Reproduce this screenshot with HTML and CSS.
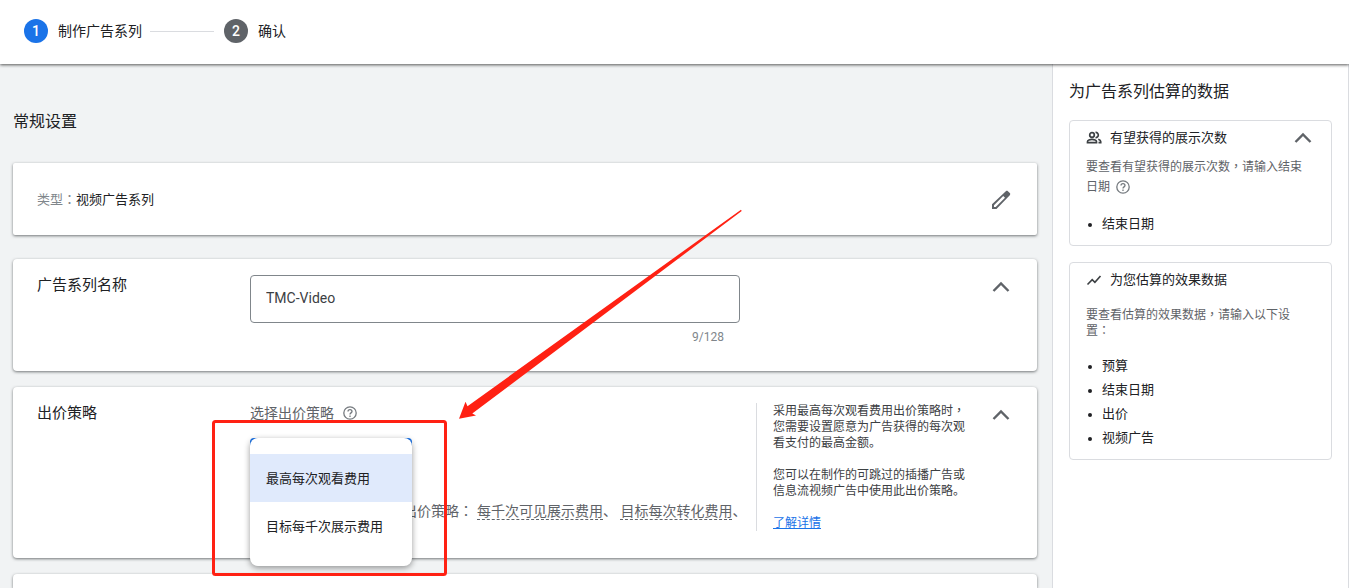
FILE: index.html
```html
<!DOCTYPE html>
<html lang="zh-CN">
<head>
<meta charset="utf-8">
<title>制作广告系列</title>
<link rel="stylesheet" href="styles.css">
</head>
<body>
<header class="steps">
  <span class="step-number current">1</span><span class="step-name">制作广告系列</span>
  <span class="step-line"></span>
  <span class="step-number">2</span><span class="step-name">确认</span>
</header>

<div class="layout">
  <main class="main">
    <h1 class="page-title">常规设置</h1>

    <section class="card type-card">
      <p class="type"><span class="type-label">类型<span class="mid" lang="zh-TW">：</span></span>视频广告系列</p>
      <button class="icon-button" aria-label="修改">
        <svg width="24" height="24" viewBox="0 0 24 24" fill="#5f6368"><path fill-rule="evenodd" d="M3 21v-4.800L16.800 3.200c.7-.6 1.500-.6 2.100 0l1.900 1.900c.6.6.6 1.500 0 2.100L7.500 21zM5 17.200V19h1.700L16 9.700 14.200 8z"/></svg>
      </button>
    </section>

    <section class="card form-card">
      <label class="card-label" for="name">广告系列名称</label>
      <div class="name-field">
        <input class="name-input" id="name" type="text" value="TMC-Video">
        <span class="counter">9/128</span>
      </div>
      <button class="icon-button last" aria-label="收起">
        <svg width="24" height="24" viewBox="0 0 24 24" fill="none" stroke="#5f6368" stroke-width="2.400"><path d="M4.500 16l7.500-7.500 7.500 7.500"/></svg>
      </button>
    </section>

    <section class="card form-card bid-card">
      <h2 class="card-label">出价策略</h2>
      <div class="bid-field">
        <div class="bid-heading">
          <label for="strategy">选择出价策略</label>
          <svg width="16" height="16" viewBox="0 0 16 16" fill="none" stroke="#757a7f" stroke-width="1.300"><circle cx="8" cy="8" r="6.200"/><path d="M6 6.600c0-1.200.9-2 2-2s2 .8 2 1.900c0 1.300-2 1.500-2 3"/><path d="M8 10.600v1.400"/></svg>
        </div>
        <div class="select-wrap">
          <select class="select" id="strategy"><option></option></select>
          <div class="menu" role="listbox">
            <button class="option selected" role="option" aria-selected="true">最高每次观看费用</button>
            <button class="option" role="option" aria-selected="false">目标每千次展示费用</button>
          </div>
        </div>
        <p class="others">出价策略<span class="mid" lang="zh-TW">：</span><span class="term">每千次可见展示费用</span>、 <span class="term">目标每次转化费用</span>、</p>
      </div>
      <aside class="help">
        <p>采用最高每次观看费用出价策略时<span class="mid" lang="zh-TW">，</span><br>您需要设置愿意为广告获得的每次观<br>看支付的最高金额。</p>
        <p>您可以在制作的可跳过的插播广告或<br>信息流视频广告中使用此出价策略。</p>
        <p><a class="link" href="#">了解详情</a></p>
      </aside>
      <button class="icon-button last" aria-label="收起">
        <svg width="24" height="24" viewBox="0 0 24 24" fill="none" stroke="#5f6368" stroke-width="2.400"><path d="M4.500 16l7.500-7.500 7.500 7.500"/></svg>
      </button>
    </section>

    <section class="card next-card"></section>
  </main>

  <aside class="sidebar">
    <h2 class="side-title">为广告系列估算的数据</h2>
    <section class="estimate">
      <div class="estimate-head">
        <svg width="16" height="16" viewBox="0 0 16 16" fill="none" stroke="#3c4043" stroke-width="1.700"><circle cx="6" cy="5" r="2.300"/><path d="M1.500 12.700v-1c0-1.500 2.500-2.400 4.500-2.400s4.500.9 4.500 2.400v1z"/><path d="M9.500 2.500c1.500-.2 2.800 1 2.800 2.500s-1.300 2.700-2.800 2.500M12.300 9.300c1.400.5 2.400 1.200 2.400 2.300v1.100h-2.200"/></svg>
        <h3 class="estimate-title">有望获得的展示次数</h3>
        <button class="icon-button last" aria-label="收起">
          <svg width="24" height="24" viewBox="0 0 24 24" fill="none" stroke="#5f6368" stroke-width="2.400"><path d="M4.500 16l7.500-7.500 7.500 7.500"/></svg>
        </button>
      </div>
      <p class="note">要查看有望获得的展示次数<span class="mid" lang="zh-TW">，</span>请输入结束<br>日期 <svg class="note-icon" width="16" height="16" viewBox="0 0 16 16" fill="none" stroke="#757a7f" stroke-width="1.300"><circle cx="8" cy="8" r="6.200"/><path d="M6 6.600c0-1.200.9-2 2-2s2 .8 2 1.900c0 1.300-2 1.500-2 3"/><path d="M8 10.600v1.400"/></svg></p>
      <ul class="needs"><li>结束日期</li></ul>
    </section>
    <section class="estimate">
      <div class="estimate-head">
        <svg width="16" height="16" viewBox="0 0 16 16" fill="none" stroke="#3c4043" stroke-width="1.600"><path d="M1.500 12.500l4.700-4.800 2.700 2.700L14.500 4"/></svg>
        <h3 class="estimate-title">为您估算的效果数据</h3>
      </div>
      <p class="note tight">要查看估算的效果数据<span class="mid" lang="zh-TW">，</span>请输入以下设<br>置<span class="mid" lang="zh-TW">：</span></p>
      <ul class="needs"><li>预算</li><li>结束日期</li><li>出价</li><li>视频广告</li></ul>
    </section>
  </aside>
</div>

<svg class="markup" width="760" height="588" viewBox="0 0 760 588" aria-hidden="true">
  <rect x="213.500" y="421.500" width="232" height="153" rx="2" fill="none" stroke="#ff2113" stroke-width="3"/>
  <path fill="#ff2113" d="M459 418.700L465.500 401.700 467.500 406.200 741 209.700 741.700 211 472.300 413.500 476 415.500z"/>
</svg>
</body>
</html>
```
FILE: styles.css
```css
* { box-sizing: border-box; }

body {
  margin: 0;
  height: 100vh;
  overflow: hidden;
  position: relative;
  display: flex;
  flex-direction: column;
  background: #f1f3f4;
  color: #202124;
  font: 13px/20px Roboto, "Noto Sans CJK SC", sans-serif;
}

h1, h2, h3, p, ul { margin: 0; padding: 0; font-weight: 400; }
button { border: 0; padding: 0; background: none; font: inherit; color: inherit; }
svg { flex: none; }

/* Chinese punctuation set in the middle of its cell */
.mid { font-family: "Noto Sans CJK TC", sans-serif; line-height: 1; }

.steps {
  position: relative;
  z-index: 1;
  flex: none;
  display: flex;
  align-items: center;
  height: 64px;
  padding: 0 24px 2px;
  background: #fff;
  box-shadow: 0 1px 3px rgba(0, 0, 0, .65);
  font-size: 14px;
}
.step-number {
  width: 24px;
  height: 24px;
  margin-right: 10px;
  border-radius: 50%;
  background: #5f6368;
  color: #fff;
  font-weight: 500;
  line-height: 24px;
  text-align: center;
}
.step-number.current { background: #1a73e8; }
.step-line { width: 64px; height: 1px; margin: 0 10px 0 8px; background: #dadce0; }

.layout { flex: 1; min-height: 0; display: flex; }
.main {
  flex: 1;
  min-width: 0;
  display: flex;
  flex-direction: column;
  padding: 46px 15px 0 13px;
}
.page-title { margin-bottom: 29px; font-size: 16px; line-height: 24px; }

.card {
  flex: none;
  margin-bottom: 16px;
  border-radius: 4px;
  background: #fff;
  box-shadow: 0 1px 3px rgba(60, 64, 67, .7);
}
.type-card {
  display: flex;
  align-items: center;
  justify-content: space-between;
  height: 72px;
  margin-bottom: 24px;
  padding: 1px 24px 0;
  border-radius: 2px;
}
.type-label { color: #80868b; }
.icon-button { width: 24px; height: 24px; }
.icon-button svg { display: block; }

.form-card {
  display: grid;
  grid-template-columns: 213px 490px 1fr 24px;
  padding: 16px 24px;
}
.form-card .last { grid-column: 4; }
.card-label { font-size: 15px; line-height: 20px; }
.name-field { display: flex; flex-direction: column; height: 80px; }
.name-input {
  width: 100%;
  height: 48px;
  padding: 0 15px 2px;
  border: 1px solid #80868b;
  border-radius: 4px;
  color: #3c4043;
  font: 14px Roboto, "Noto Sans CJK SC", sans-serif;
}
.counter {
  align-self: flex-end;
  margin: 4px 16px 0 0;
  color: #80868b;
  font-size: 12px;
}

.bid-card { padding-bottom: 27px; }
.bid-field { color: #5f6368; font-size: 14px; }
.bid-heading { display: flex; align-items: center; gap: 8px; }
.select-wrap { position: relative; width: 162px; margin-top: 15px; }
.select {
  display: block;
  width: 100%;
  height: 48px;
  appearance: none;
  border: 2px solid #1a73e8;
  border-radius: 4px;
  background: #fff;
}
.menu {
  position: absolute;
  inset: 0 0 auto;
  padding: 16px 0;
  border-radius: 8px;
  background: #fff;
  box-shadow: 0 2px 6px rgba(0, 0, 0, .4);
}
.option {
  display: block;
  width: 100%;
  height: 48px;
  padding: 2px 16px 0;
  color: #202124;
  font-size: 13px;
  text-align: left;
}
.option.selected { background: #e0eafc; }
.others { margin: 14px 0 0 153px; line-height: 22px; white-space: nowrap; }
.term { border-bottom: 1px dashed #5f6368; }
.others .mid { margin-right: 4px; }

.help {
  display: flex;
  flex-direction: column;
  gap: 16px;
  margin-left: 16px;
  padding-left: 16px;
  border-left: 1px solid #dadce0;
  color: #3c4043;
  font-size: 12px;
  line-height: 16px;
}
.link { color: #1a73e8; }
.next-card {
  flex: 1;
  min-height: 0;
  margin-bottom: 0;
  border-radius: 4px 4px 0 0;
}

.sidebar {
  flex: none;
  width: 297px;
  padding: 16px;
  border: solid #dadce0;
  border-width: 0 1px;
  background: #fff;
}
.side-title { margin-bottom: 16px; font-size: 16px; line-height: 24px; }
.estimate {
  margin-bottom: 16px;
  padding: 5px 16px 9px;
  border: 1px solid #dadce0;
  border-radius: 4px;
}
.estimate-head { display: flex; align-items: center; gap: 8px; height: 24px; }
.estimate-head .last { margin-left: auto; }
.estimate-title { font-size: 13px; }
.note { margin-top: 7px; color: #5f6368; font-size: 12px; white-space: nowrap; }
.note.tight { margin-top: 15px; line-height: 16px; }
.note-icon { margin-left: 2px; vertical-align: -4px; }
.needs { margin-top: 15px; padding-left: 16px; line-height: 24px; }
.needs li::marker { font-size: 12px; }

/* hand-drawn marks lying over the page */
.markup { position: absolute; top: 0; left: 0; z-index: 2; pointer-events: none; }
```
